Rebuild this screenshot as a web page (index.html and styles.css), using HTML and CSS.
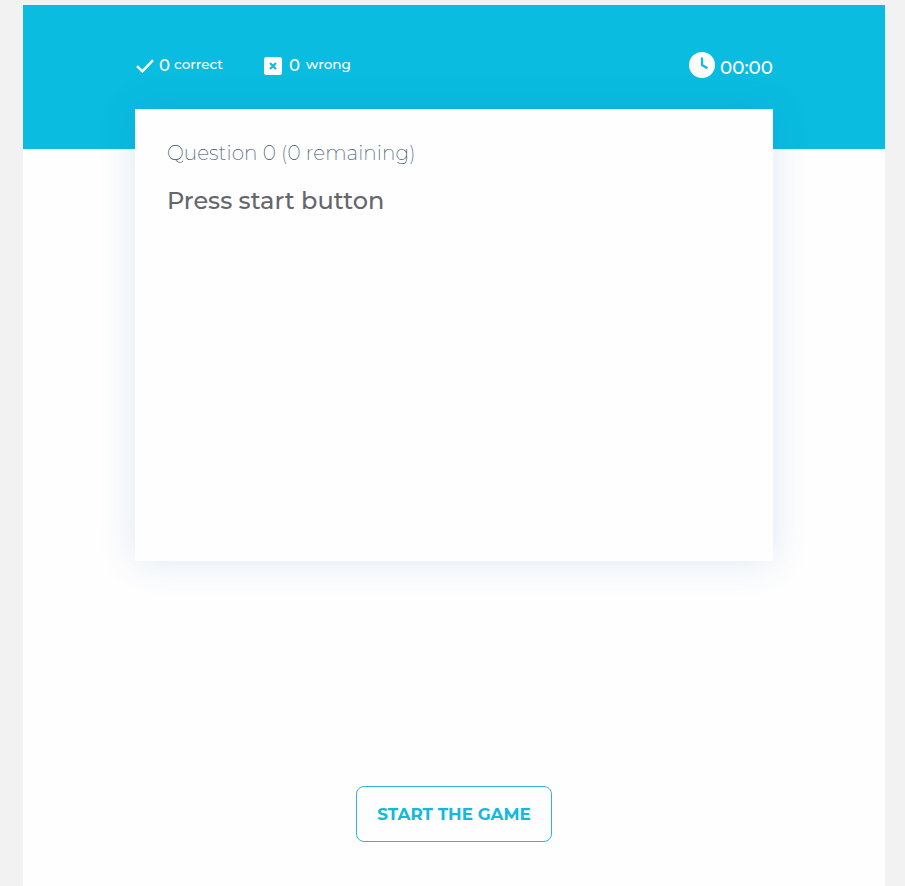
FILE: index.html
```html
<!DOCTYPE html>
<html lang="en">
<head>
<meta charset="utf-8">
<title>Quiz game</title>
<link rel="stylesheet" href="styles.css">
</head>
<body>
<main class="game">
  <header class="top">
    <div class="score">
      <svg class="check" viewBox="0 0 18 14"><path d="M1 7.2 6.4 12.3 17 1.2" fill="none" stroke="#fff" stroke-width="2.5"/></svg>
      <span class="count">0</span><span class="label correct">correct</span>
    </div>
    <div class="score wrong-score">
      <svg class="cross" viewBox="0 0 18 18"><rect width="18" height="18" rx="2.5" fill="#fff"/><path d="m6 6 6 6m0-6-6 6" stroke="#0abce0" stroke-width="2.1"/></svg>
      <span class="count">0</span><span class="label wrong">wrong</span>
    </div>
    <div class="timer">
      <svg class="clock" viewBox="0 0 26 26"><circle cx="13" cy="13" r="13" fill="#fff"/><path d="M13 5.5V13l5.5 3.2" fill="none" stroke="#0abce0" stroke-width="2.2"/></svg>
      <span class="time">00:00</span>
    </div>
  </header>
  <section class="card">
    <p class="progress">Question 0 (0 remaining)</p>
    <h1 class="question">Press start button</h1>
  </section>
  <button class="start"><span>START THE GAME</span></button>
</main>
</body>
</html>
```
FILE: styles.css
```css
* { box-sizing: border-box; }
body {
  margin: 0;
  padding: 5px 20px 0 23px;
  height: 886px;
  overflow: hidden;
  background: #f2f2f2;
  font-family: Montserrat, Inter, "Liberation Sans", sans-serif;
}
.game {
  height: 881px;
  background: #fefefe;
  display: flex;
  flex-direction: column;
  align-items: center;
}
.top {
  width: 100%;
  height: 144px;
  flex: none;
  padding: 45px 112px 0;
  background: #0abce0;
  color: #fff;
  display: flex;
  align-items: flex-start;
}
.top svg { display: block; flex: none; }
.score { display: flex; align-items: center; height: 30px; }
.check { width: 18px; height: 14px; margin: 2px 5px 0 1px; }
.count { width: 11px; font-size: 16.5px; font-weight: 550; line-height: 20px; }
.label { font-size: 13.6px; font-weight: 550; line-height: 20px; margin-top: -2px; white-space: nowrap; }
.correct { width: 49px; margin-left: 4px; }
.wrong-score { margin-left: 41px; }
.cross { width: 18px; height: 18px; margin: 2px 7px 0 0; }
.wrong { margin-left: 6px; }
.timer { margin-left: auto; display: flex; }
.clock { width: 26px; height: 26px; margin: 2px 5px 0 0; }
.time { width: 53px; margin-top: 6px; font-size: 18.3px; font-weight: 550; line-height: 24px; white-space: nowrap; }
.card {
  width: 638px;
  height: 452px;
  flex: none;
  margin-top: -40px;
  padding: 32px;
  background: #fefefe;
  box-shadow: 0 0 35px rgba(30, 90, 180, .14);
}
.progress {
  margin: 0;
  font-size: 20px;
  font-weight: 200;
  line-height: 24px;
  letter-spacing: .08px;
  color: #36506c;
}
.question {
  margin: 21px 0 0;
  font-size: 24px;
  font-weight: 500;
  line-height: 30px;
  color: #64666c;
}
.start {
  width: 196px;
  height: 56px;
  flex: none;
  margin-top: 225px;
  padding: 0;
  border: 1px solid #32b3dc;
  border-radius: 8px;
  background: transparent;
  color: #13b9dc;
  font-family: inherit;
  font-size: 16.8px;
  font-weight: 700;
  white-space: nowrap;
}
```
